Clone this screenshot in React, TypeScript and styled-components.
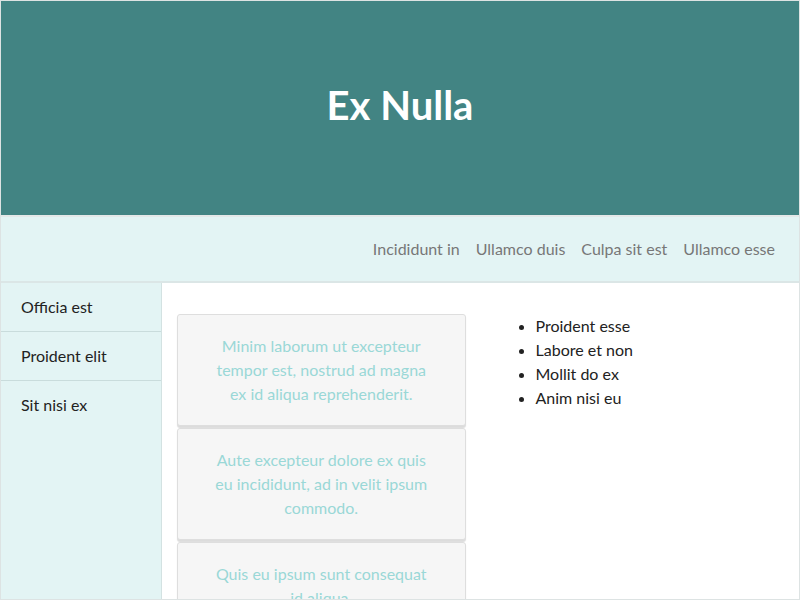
import React from 'react';
import styled, {createGlobalStyle} from 'styled-components';

const GlobalStyle = createGlobalStyle`
  html, body {
    margin: 0;
    padding: 0;
    background: #fff;
  }
  body {
    font-family: Lato, "Noto Sans", sans-serif;
    font-size: 16px;
    line-height: 24px;
    color: #222;
  }
`;

const Page = styled.div`
  width: 800px;
  height: 600px;
  box-sizing: border-box;
  border: 1px solid #dde3e3;
  overflow: hidden;
  display: flex;
  flex-direction: column;
`;

const Header = styled.header`
  height: 216px;
  box-sizing: border-box;
  padding-bottom: 6px;
  background: #428483;
  display: flex;
  align-items: center;
  justify-content: center;
  border-bottom: 2px solid #e4e8e8;
  flex-shrink: 0;
`;

const Title = styled.h1`
  margin: 0;
  color: #fff;
  font-size: 40px;
  font-weight: 700;
  line-height: 1;
`;

const Nav = styled.nav`
  height: 64px;
  background: #e3f4f4;
  border-bottom: 2px solid #dbe6e6;
  display: flex;
  align-items: center;
  justify-content: flex-end;
  padding-right: 16px;
  flex-shrink: 0;
`;

const NavLink = styled.a`
  padding: 0 8px;
  color: #777;
  text-decoration: none;
`;

const Body = styled.div`
  flex: 1;
  display: flex;
  min-height: 0;
`;

const Sidebar = styled.aside`
  width: 160px;
  background: #e3f4f4;
  border-right: 1px solid #d3e2e2;
  flex-shrink: 0;
`;

const SideItem = styled.div`
  height: 48px;
  border-bottom: 1px solid #c9dcdc;
  padding: 0 20px;
  display: flex;
  align-items: center;
  color: #222;

  &:last-child {
    border-bottom: none;
  }
`;

const Main = styled.main`
  flex: 1;
  display: grid;
  grid-template-columns: 1fr 1fr;
  padding-top: 31px;
  align-content: start;
`;

const Column = styled.div`
  padding: 0 15px;
`;

const Card = styled.div`
  background: #f6f6f6;
  border: 1px solid #dedede;
  border-radius: 3px;
  box-shadow: 0 2px 1px #dcdcdc;
  padding: 19px 32px;
  margin-bottom: 2px;
  text-align: center;
  color: #9ad8d7;
`;

const List = styled.ul`
  margin: 0;
  padding-left: 40px;
  color: #222;
`;

const navLinks = ['Incididunt in', 'Ullamco duis', 'Culpa sit est', 'Ullamco esse'];
const sideItems = ['Officia est', 'Proident elit', 'Sit nisi ex'];
const cards = [
    'Minim laborum ut excepteur tempor est, nostrud ad magna ex id aliqua reprehenderit.',
    'Aute excepteur dolore ex quis eu incididunt, ad in velit ipsum commodo.',
    'Quis eu ipsum sunt consequat id aliqua.',
];
const listItems = ['Proident esse', 'Labore et non', 'Mollit do ex', 'Anim nisi eu'];

export default function App() {
    return (
        <>
            <GlobalStyle/>
            <Page>
                <Header>
                    <Title>Ex Nulla</Title>
                </Header>
                <Nav>
                    {navLinks.map(l => <NavLink key={l} href="#">{l}</NavLink>)}
                </Nav>
                <Body>
                    <Sidebar>
                        {sideItems.map(s => <SideItem key={s}>{s}</SideItem>)}
                    </Sidebar>
                    <Main>
                        <Column>
                            {cards.map(c => <Card key={c}>{c}</Card>)}
                        </Column>
                        <Column>
                            <List>
                                {listItems.map(i => <li key={i}>{i}</li>)}
                            </List>
                        </Column>
                    </Main>
                </Body>
            </Page>
        </>
    );
}
